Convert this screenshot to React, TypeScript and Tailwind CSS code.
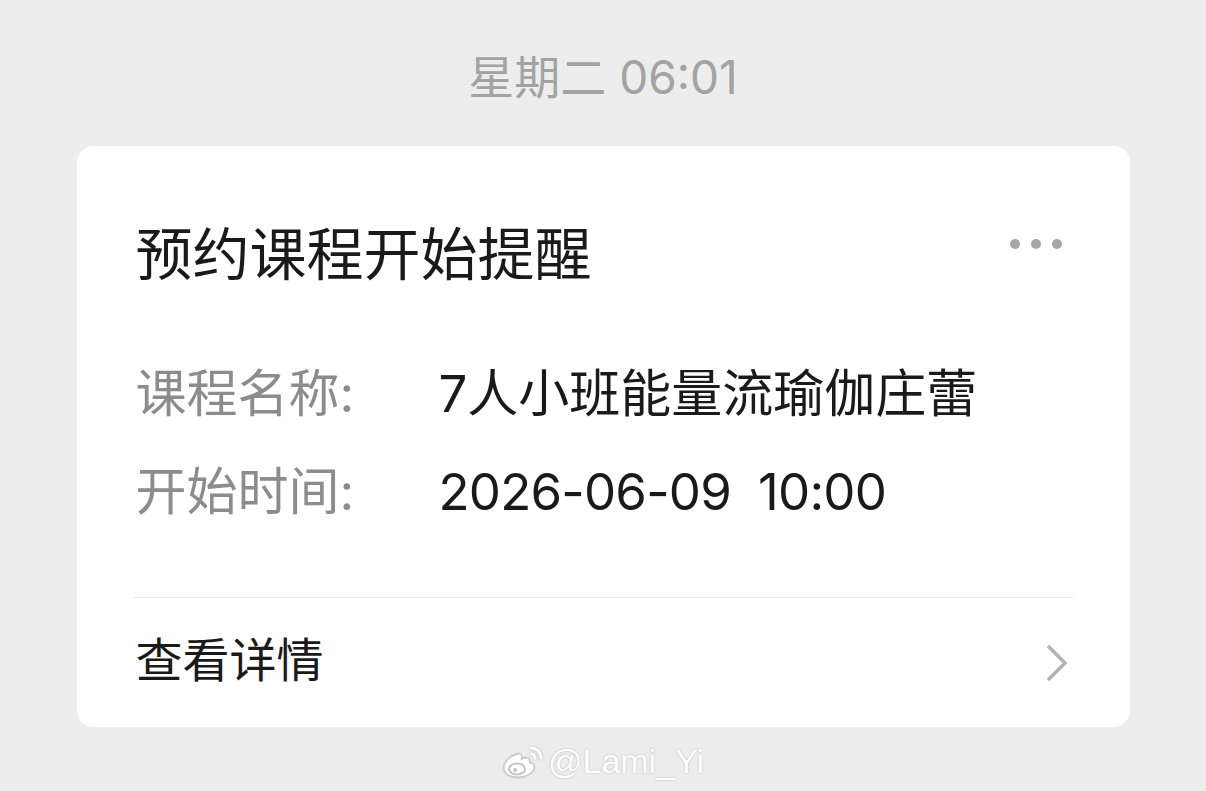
import React from "react";

const font = 'Inter, "Noto Sans CJK SC", "Noto Sans", sans-serif';

function WeiboMark() {
  return (
    <svg width="44" height="36" viewBox="0 0 44 36" className="drop-shadow-[0_0_1px_rgba(0,0,0,0.3)]">
      <g fill="none" stroke="#ffffff" strokeWidth="3" strokeLinecap="round">
        <path d="M29 5 A 10 10 0 0 1 39 15" />
        <path d="M29 11 A 4 4 0 0 1 33 15" />
      </g>
      <path
        d="M17 11 C 9 12 2 19 2 25 C 2 31 9 34 16 34 C 25 34 32 29 32 24 C 32 21 29 20 27 20 C 28 17 27 15 24 15 C 22 15 20 16 19 17 C 20 14 20 11 17 11 Z"
        fill="#ffffff"
        stroke="#c4c4c4"
        strokeWidth="1"
      />
      <ellipse cx="15" cy="26" rx="8" ry="5.5" fill="none" stroke="#c4c4c4" strokeWidth="2" />
      <circle cx="13" cy="27" r="2" fill="#c4c4c4" />
    </svg>
  );
}

export default function App() {
  return (
    <div
      className="min-h-[791px] bg-[#ededed] flex flex-col items-center"
      style={{ fontFamily: font }}
    >
      <div className="pt-[50px] h-[146px] text-[46px] leading-[54px] text-[#a3a3a3]">
        星期二 06:01
      </div>

      <div className="w-[1053px] bg-white rounded-[16px] pl-[59px] pr-[57px]">
        <div className="pt-[74px] flex items-center justify-between h-[144px]">
          <div className="text-[57px] leading-[70px] text-[#1a1a1a]">预约课程开始提醒</div>
          <div className="flex gap-[11px] mr-[11px] -mt-[22px]">
            <span className="w-[10px] h-[10px] rounded-full bg-[#a6a6a6]" />
            <span className="w-[10px] h-[10px] rounded-full bg-[#a6a6a6]" />
            <span className="w-[10px] h-[10px] rounded-full bg-[#a6a6a6]" />
          </div>
        </div>

        <div className="mt-[55px] text-[51px] leading-[98px]">
          <div className="flex">
            <span className="w-[303px] text-[#8c8c8c]">课程名称:</span>
            <span className="text-[#1a1a1a]">7人小班能量流瑜伽庄蕾</span>
          </div>
          <div className="flex">
            <span className="w-[303px] text-[#8c8c8c]">开始时间:</span>
            <span className="text-[#1a1a1a] whitespace-pre tracking-[-0.8px]">2026-06-09  10:00</span>
          </div>
        </div>

        <div className="mt-[56px] h-px bg-[#e5e5e5] -ml-[2px]" />

        <div className="h-[129px] flex items-center justify-between">
          <span className="text-[47px] text-[#1a1a1a] -mt-[4px]">查看详情</span>
          <svg width="26" height="40" viewBox="0 0 26 40" className="mr-[3px]">
            <path d="M4 3 L21 20 L4 37" fill="none" stroke="#b3b3b3" strokeWidth="3.5" />
          </svg>
        </div>
      </div>

      <div
        className="mt-[14px] flex items-center gap-[2px] text-white text-[34px] leading-[40px] [text-shadow:0_0_2px_rgba(0,0,0,0.28)]"
        style={{ fontFamily: '"Liberation Sans", Arial, sans-serif' }}
      >
        <WeiboMark />
        <span>@Lami_Yi</span>
      </div>
    </div>
  );
}
